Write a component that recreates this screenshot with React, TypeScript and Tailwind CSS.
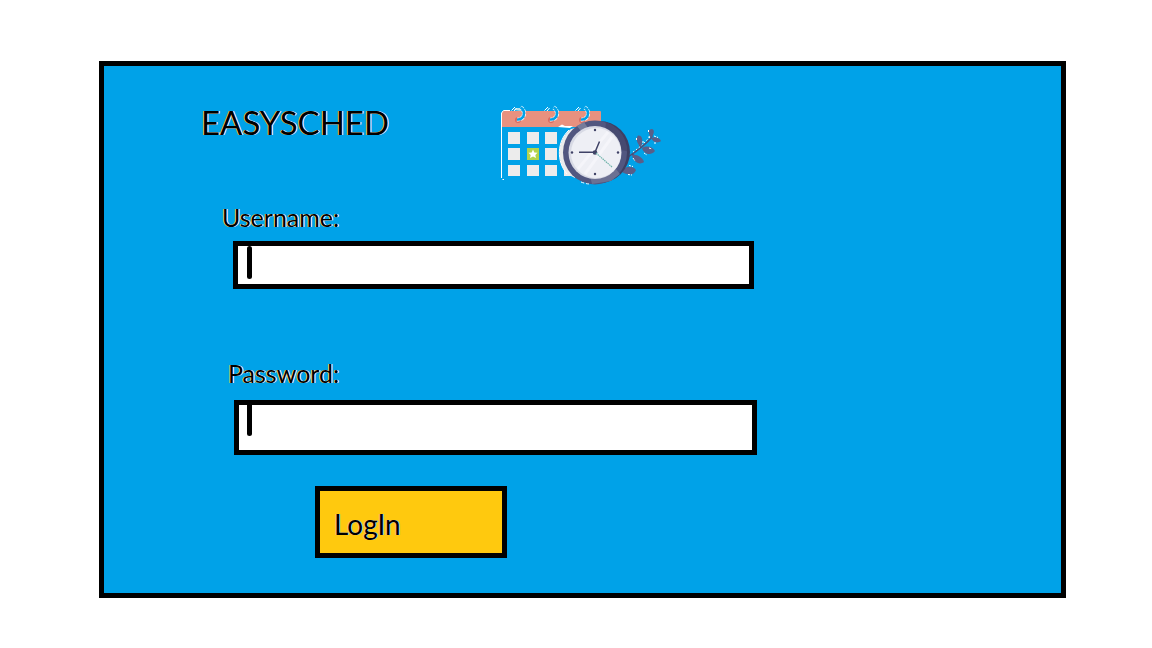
const fieldLabel =
  "block font-['Lato',sans-serif] text-[25px] leading-[32px] text-black [text-shadow:-1px_0_#f9d9a0,1px_0_#ffffff]";

function Ring({ x }: { x: number }) {
  return (
    <g transform={`translate(${x} 0)`}>
      <circle cx="0" cy="120" r="3" fill="#d9695f" />
      <path d="M-1 119.500C3 120 6 117 6 113.500C6 110.500 4.500 108.500 2.500 107.500" fill="none" stroke="#ffffff" strokeWidth="4" strokeDasharray="3 0.700" />
      <path d="M-1 119.500C3 120 6 117 6 113.500C6 110.500 4.500 108.500 2.500 107.500" fill="none" stroke="#00a2e8" strokeWidth="2.600" />
      <path d="M-6.500 110.500L-3 107M-4 111L-1.500 108" fill="none" stroke="#ffffff" strokeWidth="1" />
    </g>
  );
}

function Logo() {
  const squares = [
    [508, 132], [527, 132], [545, 132],
    [508, 148], [545, 148],
    [508, 165], [527, 165], [545, 165], [564, 165],
  ];
  return (
    <svg viewBox="496 100 170 90" className="h-[90px] w-[170px] shrink-0" role="img" aria-label="Calendar and clock">
      <path d="M502 127V112Q502 111 503 111H600Q601 111 601 112V127Z" fill="#e8917f" />
      <path d="M501.500 178V113L503.500 110.500H510M502.500 179.500H504" fill="none" stroke="#ffffff" strokeWidth="1" />
      <path d="M514 110L516 108H520L521 111Z" fill="#b6dfe6" />
      <Ring x={518} />
      <Ring x={551} />
      <Ring x={582} />
      {squares.map(([x, y]) => (
        <rect key={`${x}-${y}`} x={x} y={y} width="12" height={y === 165 ? 11 : 12} fill="#ececec" />
      ))}
      <rect x="527" y="148" width="12" height="12" fill="#b3d34c" />
      <path d="M533 149.500L534.300 152.500L537.500 152.800L535.300 155L536 158L533 156.500L530 158L530.700 155L528.500 152.800L531.700 152.500Z" fill="#ffffff" />
      <path d="M558 127L562 124.500L565 126H573L570 128Z" fill="#ffffff" />

      <path d="M628 157C637 151 647 143 652 137M640 147L639 140M632 154L638 158M652 137L651 132" fill="none" stroke="#4c4e77" strokeWidth="1.500" />
      <path d="M633 152C640 147 646 142 650 136" fill="none" stroke="#ffffff" strokeWidth="1" strokeDasharray="1.500 2" />
      <g fill="#5a5e88">
        <path d="M641 147C636 143 636 138 638 135.500C643 135 643 142 641 147Z" />
        <path d="M642 148C647 145 653 147 655 151C650 157 643 153 642 148Z" />
        <path d="M632 155C637 154 643 158 644 162C639 166 633 161 632 155Z" />
        <path d="M622 172C625 165 633 166 636 170C634 176 627 175 622 172Z" />
        <path d="M651 138C647 132 649 129 652 129C655 130 654 134 651 138Z" />
        <path d="M651 138C655 136 660 138 661 141C657 144 653 142 651 138Z" />
      </g>
      <path d="M636.500 138V141M643 141V144M649 148L652 149M644 153L647 155M633 158L635 161M629 165.500L633 166.500M628 174.500L632 175M648.500 130V133M654 136L658 137.500M654 143H657M649 136L650 139" stroke="#ffffff" strokeWidth="1" strokeDasharray="2 1" />

      <path d="M571 129C557 139 556 161 567 174L575 178V128Z" fill="#ececec" />
      <path d="M569 130C557 141 556 161 567 174" fill="none" stroke="#ffffff" strokeWidth="1" />
      <circle cx="599" cy="152" r="31" fill="#3d3f63" />
      <circle cx="595" cy="152.500" r="32" fill="#525780" />
      <path d="M577 126L584 122L588 128L581 131Z" fill="#777c9b" />
      <path d="M592 184L590 176L607 173L616 169L620 174L611 181Z" fill="#6c7193" />
      <path d="M606 122C621 128 627 140 627 151L620 150L605 132Z" fill="#464a70" />
      <path d="M581 182Q586 184 590 184" fill="none" stroke="#ffffff" strokeWidth="1" strokeDasharray="3 2" />
      <circle cx="595" cy="152.500" r="26.500" fill="#d8dae5" />
      <circle cx="596" cy="153" r="25" fill="#eeeff5" />
      <path d="M608 132L578 169M612 137L585 174" stroke="#f5f5fa" strokeWidth="3" />
      <g fill="#3f4266">
        <circle cx="595" cy="130" r="1.200" />
        <circle cx="618" cy="152.500" r="1.200" />
        <circle cx="595" cy="174" r="1.200" />
        <circle cx="572" cy="152.500" r="1.200" />
        <circle cx="595" cy="152.500" r="2.300" />
      </g>
      <path d="M579 152.300H595L599.500 141.500" fill="none" stroke="#3f4266" strokeWidth="1.500" />
      <path d="M596 153L612 167" stroke="#6fb3aa" strokeWidth="1.200" strokeDasharray="1.500 0.700" />
    </svg>
  );
}

export default function App() {
  return (
    <main className="flex min-h-screen flex-col bg-white pt-[61px] pr-[86px] pb-[50px] pl-[99px]">
      <section className="flex-1 border-[5px] border-black bg-[#00a2e8] pb-[35px] pl-[97px]">
        <header className="flex items-start pt-[34px]">
          <h1 className="w-[295px] shrink-0 font-['Lato',sans-serif] text-[33px] leading-[44px] text-black [text-shadow:-1px_0_#f9c98a,1px_0_#ffffff]">
            EASYSCHED
          </h1>
          <Logo />
        </header>
        <form className="pr-[307px] pl-[21px]" onSubmit={(e) => e.preventDefault()}>
          <div className="pt-[11px]">
            <label htmlFor="username" className={fieldLabel}>Username:</label>
            <div className="relative mt-[8px] ml-[11px]">
              <input id="username" type="text" className="block h-[48px] w-full rounded-none border-[5px] border-black bg-white px-4 text-[24px] outline-none" />
              <span aria-hidden="true" className="pointer-events-none absolute top-[5px] left-[14px] h-[33px] w-[5px] rounded-full bg-black" />
            </div>
          </div>
          <div className="pt-[68px]">
            <label htmlFor="password" className={`${fieldLabel} pl-[6px]`}>Password:</label>
            <div className="relative mt-[11px] mr-[-3px] ml-[12px]">
              <input id="password" type="password" className="block h-[55px] w-full rounded-none border-[5px] border-black bg-white px-4 text-[24px] outline-none" />
              <span aria-hidden="true" className="pointer-events-none absolute top-[5px] left-[13px] h-[31px] w-[5px] rounded-b-full bg-black" />
            </div>
          </div>
          <button type="submit" className="mt-[31px] ml-[93px] block h-[72px] w-[192px] border-[5px] border-black bg-[#ffc90e] pt-[3px] pl-[14px] text-left font-['Lato',sans-serif] text-[28px] leading-[36px] text-black [text-shadow:-1px_0_#f9b96a,1px_0_#bfe6f5]">
            LogIn
          </button>
        </form>
      </section>
    </main>
  );
}
